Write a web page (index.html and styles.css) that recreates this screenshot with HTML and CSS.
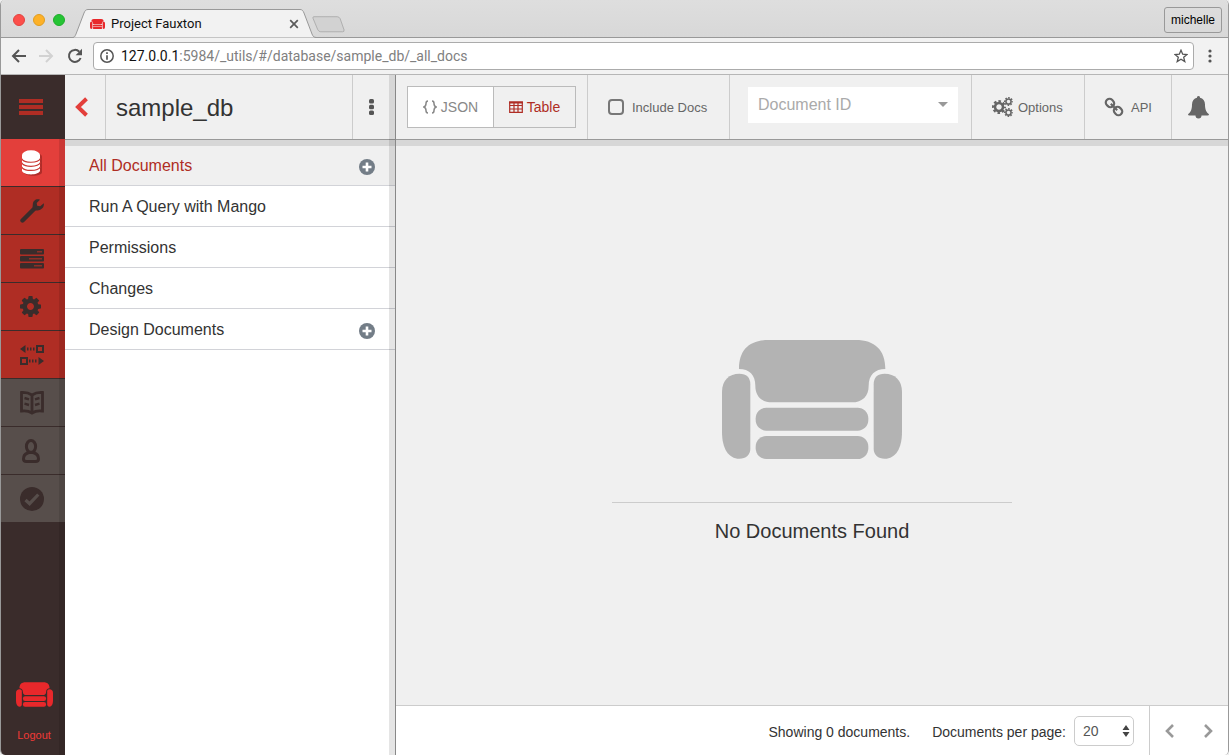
FILE: index.html
```html
<!DOCTYPE html>
<html lang="en">
<head>
<meta charset="utf-8">
<title>Project Fauxton</title>
<link rel="stylesheet" href="styles.css">
</head>
<body>
<svg class="defs" aria-hidden="true">
  <symbol id="couch" viewBox="66 60 540 357">
    <path d="M117 147C117 90 147 60 205 60H467C525 60 556 90 556 147C525 147 506 165 506 197C506 228 488 247 455 247H217C184 247 166 228 166 197C166 165 148 147 117 147Z"/>
    <rect x="167" y="263" width="338" height="69" rx="32"/>
    <rect x="167" y="348" width="338" height="69" rx="32"/>
    <path d="M66 215C66 180 88 161 118 161C140 161 151 173 151 193V386C151 404 138 416 118 416C85 416 66 385 66 335Z"/>
    <path d="M606 215C606 180 584 161 554 161C532 161 521 173 521 193V386C521 404 534 416 554 416C587 416 606 385 606 335Z"/>
  </symbol>
  <symbol id="cog" viewBox="128 128 1536 1536">
    <path d="M1152 896q0-106-75-181t-181-75-181 75-75 181 75 181 181 75 181-75 75-181zm512-109v222q0 12-8 23t-20 13l-185 28q-19 54-39 91 35 50 107 138 10 12 10 25t-9 23q-27 37-99 108t-94 71q-12 0-26-9l-138-108q-44 23-91 38-16 136-29 186-7 28-36 28h-222q-14 0-24.500-8.500t-11.500-21.500l-28-184q-49-16-90-37l-141 107q-10 9-25 9-14 0-25-11-126-114-165-168-7-10-7-23 0-12 8-23 15-21 51-66.500t54-70.500q-27-50-41-99l-183-27q-13-2-21-12.500t-8-23.500v-222q0-12 8-23t19-13l186-28q14-46 39-92-40-57-107-138-10-12-10-24 0-10 9-23 26-36 98.500-107.500t94.500-71.500q13 0 26 10l138 107q44-23 91-38 16-136 29-186 7-28 36-28h222q14 0 24.500 8.500t11.500 21.500l28 184q49 16 90 37l142-107q9-9 24-9 13 0 25 10 129 119 165 170 7 8 7 22 0 12-8 23-15 21-51 66.500t-54 70.500q26 50 41 98l183 28q13 2 21 12.500t8 23.500z"/>
  </symbol>
  <symbol id="gear" viewBox="-10 -10 20 20">
    <circle r="5.700" fill="none" stroke="currentColor" stroke-width="3.600"/>
    <circle r="8.300" fill="none" stroke="currentColor" stroke-width="3.400" stroke-dasharray="3.600 2.920" stroke-dashoffset="1.800"/>
  </symbol>
  <symbol id="plus" viewBox="0 0 16 16">
    <circle cx="8" cy="8" r="8"/>
    <path d="M8 3.500v9M3.500 8h9" stroke="#fff" stroke-width="2.600"/>
  </symbol>
</svg>

<div class="window">
  <header class="titlebar">
    <div class="lights">
      <button class="light close" aria-label="Close window"></button>
      <button class="light minimise" aria-label="Minimise window"></button>
      <button class="light maximise" aria-label="Zoom window"></button>
    </div>
    <div class="tab">
      <svg class="tab-shape" viewBox="0 0 243 29" width="243" height="29" aria-hidden="true"><path d="M0 28.500C2 28 2 27 3 25L11 4C12 1.500 13 .5 15 .5H227C229 .5 230 1.500 231 4L239 25C240 27 240 28 243 28.500" fill="#f2f2f2" stroke="#999"/></svg>
      <svg class="tab-icon" width="15" height="10" fill="#e8282b" aria-hidden="true"><use href="#couch"/></svg>
      <span class="tab-title">Project Fauxton</span>
      <button class="tab-close" aria-label="Close tab"><svg width="10" height="10" viewBox="0 0 10 10"><path d="M1.200 1.200L8.800 8.800M8.800 1.200L1.200 8.800" stroke="#5a5a5a" stroke-width="1.700"/></svg></button>
    </div>
    <button class="new-tab" aria-label="New tab"><svg width="33" height="17" viewBox="0 0 34 17"><path d="M2 .5H26Q28 .5 29 2.500L33 14Q33.500 16 31.500 16H9Q7 16 6 14L1 2Q.5 .5 2 .5Z" fill="#d2d2d2" stroke="#adadad"/></svg></button>
    <button class="profile">michelle</button>
  </header>

  <div class="toolbar">
    <button class="nav" aria-label="Back"><svg width="16" height="14" viewBox="0 0 16 14"><path d="M15 7H2M8 1L2 7L8 13" fill="none" stroke="#555" stroke-width="2"/></svg></button>
    <button class="nav" aria-label="Forward"><svg width="16" height="14" viewBox="0 0 16 14"><path d="M0 7H13M7 1L13 7L7 13" fill="none" stroke="#d2d2d2" stroke-width="2"/></svg></button>
    <button class="nav" aria-label="Reload"><svg width="16" height="16" viewBox="0 0 16 16"><path d="M13.600 10A6 6 0 1 1 12.300 3.700" fill="none" stroke="#555" stroke-width="2"/><path d="M15 .8V7.200H8.600Z" fill="#555"/></svg></button>
    <div class="address">
      <svg width="14" height="14" viewBox="0 0 14 14" aria-hidden="true"><circle cx="7" cy="7" r="6.200" fill="none" stroke="#555" stroke-width="1.500"/><path d="M7 6.200V10.700M7 3.200V4.900" stroke="#555" stroke-width="1.700"/></svg>
      <div class="url"><span class="host">127.0.0.1</span>:5984/_utils/#/database/sample_db/_all_docs</div>
      <button class="star" aria-label="Bookmark"><svg width="14" height="14" viewBox="0 0 14 14"><path d="M7 1.200L8.700 5.200L13 5.500L9.700 8.300L10.800 12.600L7 10.300L3.200 12.600L4.300 8.300L1 5.500L5.300 5.200Z" fill="none" stroke="#555" stroke-width="1.300"/></svg></button>
    </div>
    <button class="browser-menu" aria-label="Browser menu"><svg width="4" height="14" viewBox="0 0 4 14" fill="#555"><circle cx="2" cy="2" r="1.600"/><circle cx="2" cy="7" r="1.600"/><circle cx="2" cy="12" r="1.600"/></svg></button>
  </div>

  <div class="app">
    <nav class="rail" aria-label="Main">
      <button class="burger" aria-label="Toggle menu"><svg width="24" height="16" viewBox="0 0 24 16"><path d="M0 2H24M0 8H24M0 14H24" stroke="#af2d24" stroke-width="4"/></svg></button>
      <div class="rail-body">
        <a class="rail-item active" href="#databases" aria-label="Databases"><svg width="20" height="26" viewBox="0 0 20 26">
          <path d="M2 7C2 1 20 1 20 7V22C20 27 2 27 2 22Z" fill="#b02d29"/>
          <path d="M0 5V21C2 25.500 16 25.500 18 21V5Z" fill="#fff"/>
          <ellipse cx="9" cy="5" rx="9" ry="4.700" fill="#fff"/>
          <path d="M-.5 8.500C2 13.500 16 13.500 18.500 8.500M-.5 12.600C2 17.600 16 17.600 18.500 12.600M-.5 16.700C2 21.700 16 21.700 18.500 16.700" fill="none" stroke="#c93833" stroke-width="1.200"/>
        </svg></a>
        <a class="rail-item" href="#setup" aria-label="Setup"><svg width="24" height="24" viewBox="0 0 24 24"><path d="M2.500 21.500L14 10" stroke="currentColor" stroke-width="4.400" stroke-linecap="round"/><path d="M20 .8C16.500-.6 13 1.500 12.800 5.500L12.500 8.500L15.500 11.500C16.500 11.700 19 11.700 21 10.300C23.500 8.800 24.200 6.500 23.800 4.300L20.200 7.300L17.200 6.800L16.700 4Z" fill="currentColor"/></svg></a>
        <a class="rail-item" href="#tasks" aria-label="Active tasks"><svg width="24" height="20" viewBox="0 0 24 20" fill="currentColor"><rect width="24" height="5.500" rx="1"/><rect y="7" width="24" height="5.500" rx="1"/><rect y="14" width="24" height="5.500" rx="1"/><path d="M17 2.700H22M9 9.700H22M14 16.700H22" stroke="#8d2f27" stroke-width="1.600"/></svg></a>
        <a class="rail-item" href="#config" aria-label="Configuration"><svg width="24" height="21" viewBox="0 0 24 21" fill="currentColor"><use href="#cog" width="21" height="21"/></svg></a>
        <a class="rail-item" href="#replication" aria-label="Replication"><svg width="24" height="20" viewBox="0 0 24 20" fill="currentColor"><path d="M0 4L5.500 0V8ZM24 16L18.500 12V20Z"/><path d="M7 2.500h1.500v3H7zM10 2.500h1.500v3H10zM13 2.500h1.500v3H13zM9 14.500h1.500v3H9zM12 14.500h1.500v3H12zM15 14.500h1.500v3H15z"/><path d="M17 1H23V7H17ZM1 13H7V19H1Z" fill="none" stroke="currentColor" stroke-width="2"/></svg></a>
        <a class="rail-item muted" href="#docs" aria-label="Documentation"><svg width="24" height="24" viewBox="0 0 24 24"><path d="M12 4C9 2 5 1.300 1.500 1.500V20C5 19.500 9 20 12 22C15 20 19 19.500 22.500 20V1.500C19 1.300 15 2 12 4ZM12 4V22" fill="none" stroke="currentColor" stroke-width="2.800"/><path d="M4.500 7L9 8.300M4.500 12.700L9 14M19.500 7L15 8.300M19.500 12.700L15 14" stroke="currentColor" stroke-width="2.400"/></svg></a>
        <a class="rail-item muted" href="#account" aria-label="Account"><svg width="20" height="24" viewBox="0 0 20 24"><ellipse cx="9" cy="7.500" rx="4.600" ry="6" fill="none" stroke="currentColor" stroke-width="3"/><path d="M5.500 14C3 15 1.500 17 1.500 20Q1.500 22.500 4.500 22.500H13.500Q16.500 22.500 16.500 20C16.500 17 15 15 12.500 14Q9 12.500 5.500 14Z" fill="none" stroke="currentColor" stroke-width="3"/></svg></a>
        <a class="rail-item muted" href="#verify" aria-label="Verify"><svg width="24" height="24" viewBox="0 0 24 24"><circle cx="12" cy="12" r="12" fill="currentColor"/><path d="M5.500 13L9.600 16.700L18.300 7.500" fill="none" stroke="#574e4b" stroke-width="3.200"/></svg></a>
        <a class="logout" href="#logout"><svg width="37" height="25" fill="#e8282b" aria-hidden="true"><use href="#couch"/></svg>Logout</a>
      </div>
    </nav>

    <aside class="panel">
      <div class="panel-header">
        <a class="back" href="#databases" aria-label="Back to databases"><svg width="13" height="20" viewBox="0 0 13 20"><path d="M11.500 1.800L3 10L11.500 18.200" fill="none" stroke="#e33f3b" stroke-width="4"/></svg></a>
        <h1>sample_db</h1>
        <button class="kebab" aria-label="Database actions"><svg width="5" height="16" viewBox="0 0 5 16" fill="#555"><rect width="5" height="4.500" rx="1.500"/><rect y="5.700" width="5" height="4.500" rx="1.500"/><rect y="11.500" width="5" height="4.500" rx="1.500"/></svg></button>
      </div>
      <ul class="menu">
        <li class="selected"><a href="#all">All Documents</a><button aria-label="Add document"><svg width="16" height="16" fill="#737d87"><use href="#plus"/></svg></button></li>
        <li><a href="#mango">Run A Query with Mango</a></li>
        <li><a href="#permissions">Permissions</a></li>
        <li><a href="#changes">Changes</a></li>
        <li><a href="#design">Design Documents</a><button aria-label="Add design document"><svg width="16" height="16" fill="#737d87"><use href="#plus"/></svg></button></li>
      </ul>
    </aside>

    <main class="content">
      <div class="content-header">
        <div class="cell views">
          <button class="view"><svg width="14" height="14" viewBox="0 0 14 14"><path d="M5 1C3 1 3 2 3 3.500C3 6 2.500 6.500 .8 7C2.500 7.500 3 8 3 10.500C3 12 3 13 5 13M9 1C11 1 11 2 11 3.500C11 6 11.500 6.500 13.200 7C11.500 7.500 11 8 11 10.500C11 12 11 13 9 13" fill="none" stroke="currentColor" stroke-width="1.500"/></svg>JSON</button>
          <button class="view current"><svg width="14" height="12" viewBox="0 0 14 12"><path d="M.7 1.200H13.300V11.300H.7ZM.7 4.500H13.300M.7 8H13.300M5 2V11M9 2V11" fill="none" stroke="currentColor" stroke-width="1.200"/><path d="M0 .5H14V2.500H0Z" fill="currentColor"/></svg>Table</button>
        </div>
        <div class="cell include"><input type="checkbox" id="include"><label for="include">Include Docs</label></div>
        <div class="cell search">
          <div class="combo"><input type="text" placeholder="Document ID" aria-label="Document ID"><svg width="10" height="5" viewBox="0 0 10 5" aria-hidden="true"><path d="M0 0H10L5 5Z" fill="#999"/></svg></div>
        </div>
        <button class="cell options"><svg width="21" height="20" viewBox="0 0 21 20"><use href="#gear" x="0" y="3" width="14" height="14"/><use href="#gear" x="12" y="0" width="9" height="9"/><use href="#gear" x="12" y="11" width="9" height="9"/></svg>Options</button>
        <button class="cell api"><svg width="20" height="20" viewBox="0 0 20 20"><g fill="none" stroke="currentColor" stroke-width="2.200" transform="rotate(45 10 10)"><rect x="0" y="6.300" width="8.600" height="7.400" rx="3.500"/><rect x="11.400" y="6.300" width="8.600" height="7.400" rx="3.500"/><path d="M5.500 10H14.500"/></g></svg>API</button>
        <button class="cell bell" aria-label="Notifications"><svg width="21" height="23" viewBox="0 0 21 23" fill="currentColor"><path d="M10.500 0C9.300 0 9 .8 9 1.800C6 2.500 4 4.800 4 8.500C4 14 2.500 16.500 0 18.200Q0 19.500 1.500 19.500H19.500Q21 19.500 21 18.200C18.500 16.500 17 14 17 8.500C17 4.800 15 2.500 12 1.800C12 .8 11.700 0 10.500 0ZM7.500 19.500A3 3 0 0 0 13.500 19.500Z"/></svg></button>
      </div>
      <section class="empty">
        <svg width="180" height="119" fill="#b3b3b3" aria-hidden="true"><use href="#couch"/></svg>
        <h2>No Documents Found</h2>
      </section>
      <footer class="footer">
        <span class="showing">Showing 0 documents.</span>
        <label for="per-page">Documents per page:</label>
        <div class="select"><select id="per-page"><option>20</option></select><svg width="8" height="12" viewBox="0 0 8 12" aria-hidden="true"><path d="M4 0L7.500 5H.5ZM4 12L7.500 7H.5Z" fill="#444"/></svg></div>
        <div class="pager">
          <button aria-label="Previous page"><svg width="10" height="14" viewBox="0 0 10 14"><path d="M8 1L2 7L8 13" fill="none" stroke="#999" stroke-width="2.600"/></svg></button>
          <button aria-label="Next page"><svg width="10" height="14" viewBox="0 0 10 14"><path d="M2 1L8 7L2 13" fill="none" stroke="#999" stroke-width="2.600"/></svg></button>
        </div>
      </footer>
    </main>
  </div>
</div>
</body>
</html>
```
FILE: styles.css
```css
* { box-sizing: border-box; }
body { margin: 0; background: #eee; font-family: "Liberation Sans", Arial, sans-serif; font-size: 16px; color: #333; }
button { margin: 0; padding: 0; border: 0; background: none; font: inherit; color: inherit; }
a { color: inherit; text-decoration: none; }
svg { display: block; flex: none; }
.defs { position: absolute; width: 0; height: 0; }

.window { display: flex; flex-direction: column; height: 100vh; border: solid #999; border-width: 0 1px; border-radius: 5px; overflow: hidden; background: #fff; }

.titlebar { display: flex; flex: none; align-items: flex-end; height: 38px; border-bottom: 1px solid #999; background: linear-gradient(#dedede, #d8d8d8); }
.lights { display: flex; gap: 8px; padding-left: 12px; align-self: center; }
.light { width: 12px; height: 12px; border-radius: 50%; margin-bottom: -2px; }
.close { background: #fc4f4b; border: 1px solid #e2433f; }
.minimise { background: #fdb128; border: 1px solid #e09d20; }
.maximise { background: #25c434; border: 1px solid #1ead2b; }
.tab { position: relative; display: flex; align-items: center; width: 243px; height: 29px; margin: 0 -4px -1px 8px; padding: 0 17px; }
.tab-shape { position: absolute; inset: 0; }
.tab-icon { position: relative; }
.tab-title { position: relative; flex: 1; padding-left: 6px; font: 13px Roboto, sans-serif; color: #111; }
.tab-close { position: relative; }
.new-tab { padding-bottom: 4px; }
.profile { height: 26px; margin: 0 6px 4px auto; padding: 0 6px; border: 1px solid #999; border-radius: 3px; font-size: 12px; color: #000; }

.toolbar { display: flex; align-items: center; flex: none; height: 37px; padding: 0 16px 0 10px; border-bottom: 1px solid #b6b6b6; background: #f2f2f2; }
.nav { margin-right: 12px; }
.address { display: flex; align-items: center; flex: 1; height: 28px; margin-right: 14px; padding: 0 5px 0 6px; border: 1px solid #ababab; border-radius: 4px; background: #fff; }
.nav + .address { margin-left: -2px; }
.url { flex: 1; padding-left: 7px; font: 14px Roboto, sans-serif; color: #808080; }
.host { color: #111; }

.app { display: flex; flex: 1; min-height: 0; }
.rail { display: flex; flex-direction: column; width: 64px; background: #3a2c2b; color: #3a2c2b; }
.burger { display: grid; place-items: center start; height: 64px; padding-left: 18px; }
.rail-body { position: relative; display: flex; flex-direction: column; flex: 1; }
.rail-body::after { content: ""; position: absolute; inset: 0 0 0 auto; width: 6px; background: rgba(0, 0, 0, .1); pointer-events: none; }
.rail-item { display: grid; place-items: center; height: 48px; padding-right: 2px; border-bottom: 1px solid #3a2c2b; background: #af2d24; }
.active { background: #e33f3b; }
.muted { background: #574e4b; }
.logout { display: grid; justify-items: center; gap: 20px; margin-top: auto; padding: 0 0 12px 2px; font-size: 11px; line-height: 16px; color: #f03a37; }

.panel { position: relative; width: 331px; border-right: 1px solid #888; background: #fff; }
.panel::after { content: ""; position: absolute; inset: 0 0 0 auto; width: 6px; background: rgba(0, 0, 0, .1); pointer-events: none; }
.panel-header, .content-header { position: relative; display: flex; flex: none; height: 65px; border-bottom: 1px solid #999; background: #f0f0f0; }
.panel-header::after, .content-header::after { content: ""; position: absolute; top: 65px; left: 0; right: 0; height: 6px; background: rgba(0, 0, 0, .1); }
.back { display: grid; place-items: center; width: 41px; padding-right: 8px; border-right: 1px solid #ccc; }
h1 { flex: 1; margin: 0; padding-left: 10px; font-size: 24px; font-weight: 400; line-height: 66px; }
.kebab { width: 43px; padding-left: 16px; border-left: 1px solid #ccc; }
.menu { margin: 0; padding: 0; list-style: none; }
.menu li { display: flex; align-items: center; justify-content: space-between; height: 41px; padding: 2px 20px 0 24px; border-bottom: 1px solid #d2d3d8; }
.menu .selected { height: 46px; padding-top: 7px; background: #f0f0f0; color: #af2d24; }
.menu button { padding-top: 2px; }

.content { display: flex; flex-direction: column; flex: 1; min-width: 0; background: #f0f0f0; }
.cell { display: flex; flex: none; align-items: center; color: #666; font-size: 13px; }
.content-header .cell { border-right: 1px solid #ccc; }
.views { padding: 0 11px; }
.view { display: flex; align-items: center; justify-content: center; gap: 4px; width: 87px; height: 42px; border: 1px solid #bbb; background: #fff; font-size: 14px; color: #888; }
.view.current { width: 83px; margin-left: -1px; background: #f0f0f0; color: #af2d24; }
.include { width: 142px; padding-left: 20px; gap: 8px; }
.include input { appearance: none; width: 16px; height: 16px; margin: 0; border: 2px solid #777; border-radius: 4px; }
.search { flex: 1; min-width: 0; padding: 0 13px 5px 18px; }
.combo { display: flex; align-items: center; flex: 1; min-width: 0; height: 36px; padding: 0 10px; background: #fff; }
.combo input { flex: 1; min-width: 0; padding: 0; border: 0; background: none; outline: 0; font: inherit; font-size: 16px; }
.combo input::placeholder { color: #aaa; }
.options { width: 113px; padding-left: 20px; gap: 5px; }
.api { width: 87px; padding-left: 19px; gap: 7px; }
.bell { width: 56px; padding-left: 16px; }
.content-header .bell { border-right: 0; }

.empty { display: flex; flex-direction: column; align-items: center; justify-content: center; flex: 1; padding-top: 56px; }
h2 { width: 400px; margin: 43px 0 0; padding: 16px 0 18px; border-top: 1px solid #ccc; font-size: 20px; font-weight: 400; line-height: 24px; text-align: center; }
.footer { display: flex; flex: none; align-items: center; justify-content: flex-end; height: 50px; border-top: 1px solid #ccc; background: #fff; font-size: 14px; }
.showing, .footer label { padding-top: 2px; }
.showing { margin-right: 22px; }
.select { position: relative; margin: 0 15px 0 8px; }
.select select { appearance: none; display: block; width: 60px; height: 30px; padding: 0 8px; border: 1px solid #ccc; border-radius: 5px; background: #fff; font: inherit; color: #555; }
.select svg { position: absolute; right: 4px; top: 9px; pointer-events: none; }
.pager { display: flex; align-items: center; justify-content: space-between; align-self: stretch; width: 79px; padding: 0 15px; border-left: 1px solid #ccc; }
```
